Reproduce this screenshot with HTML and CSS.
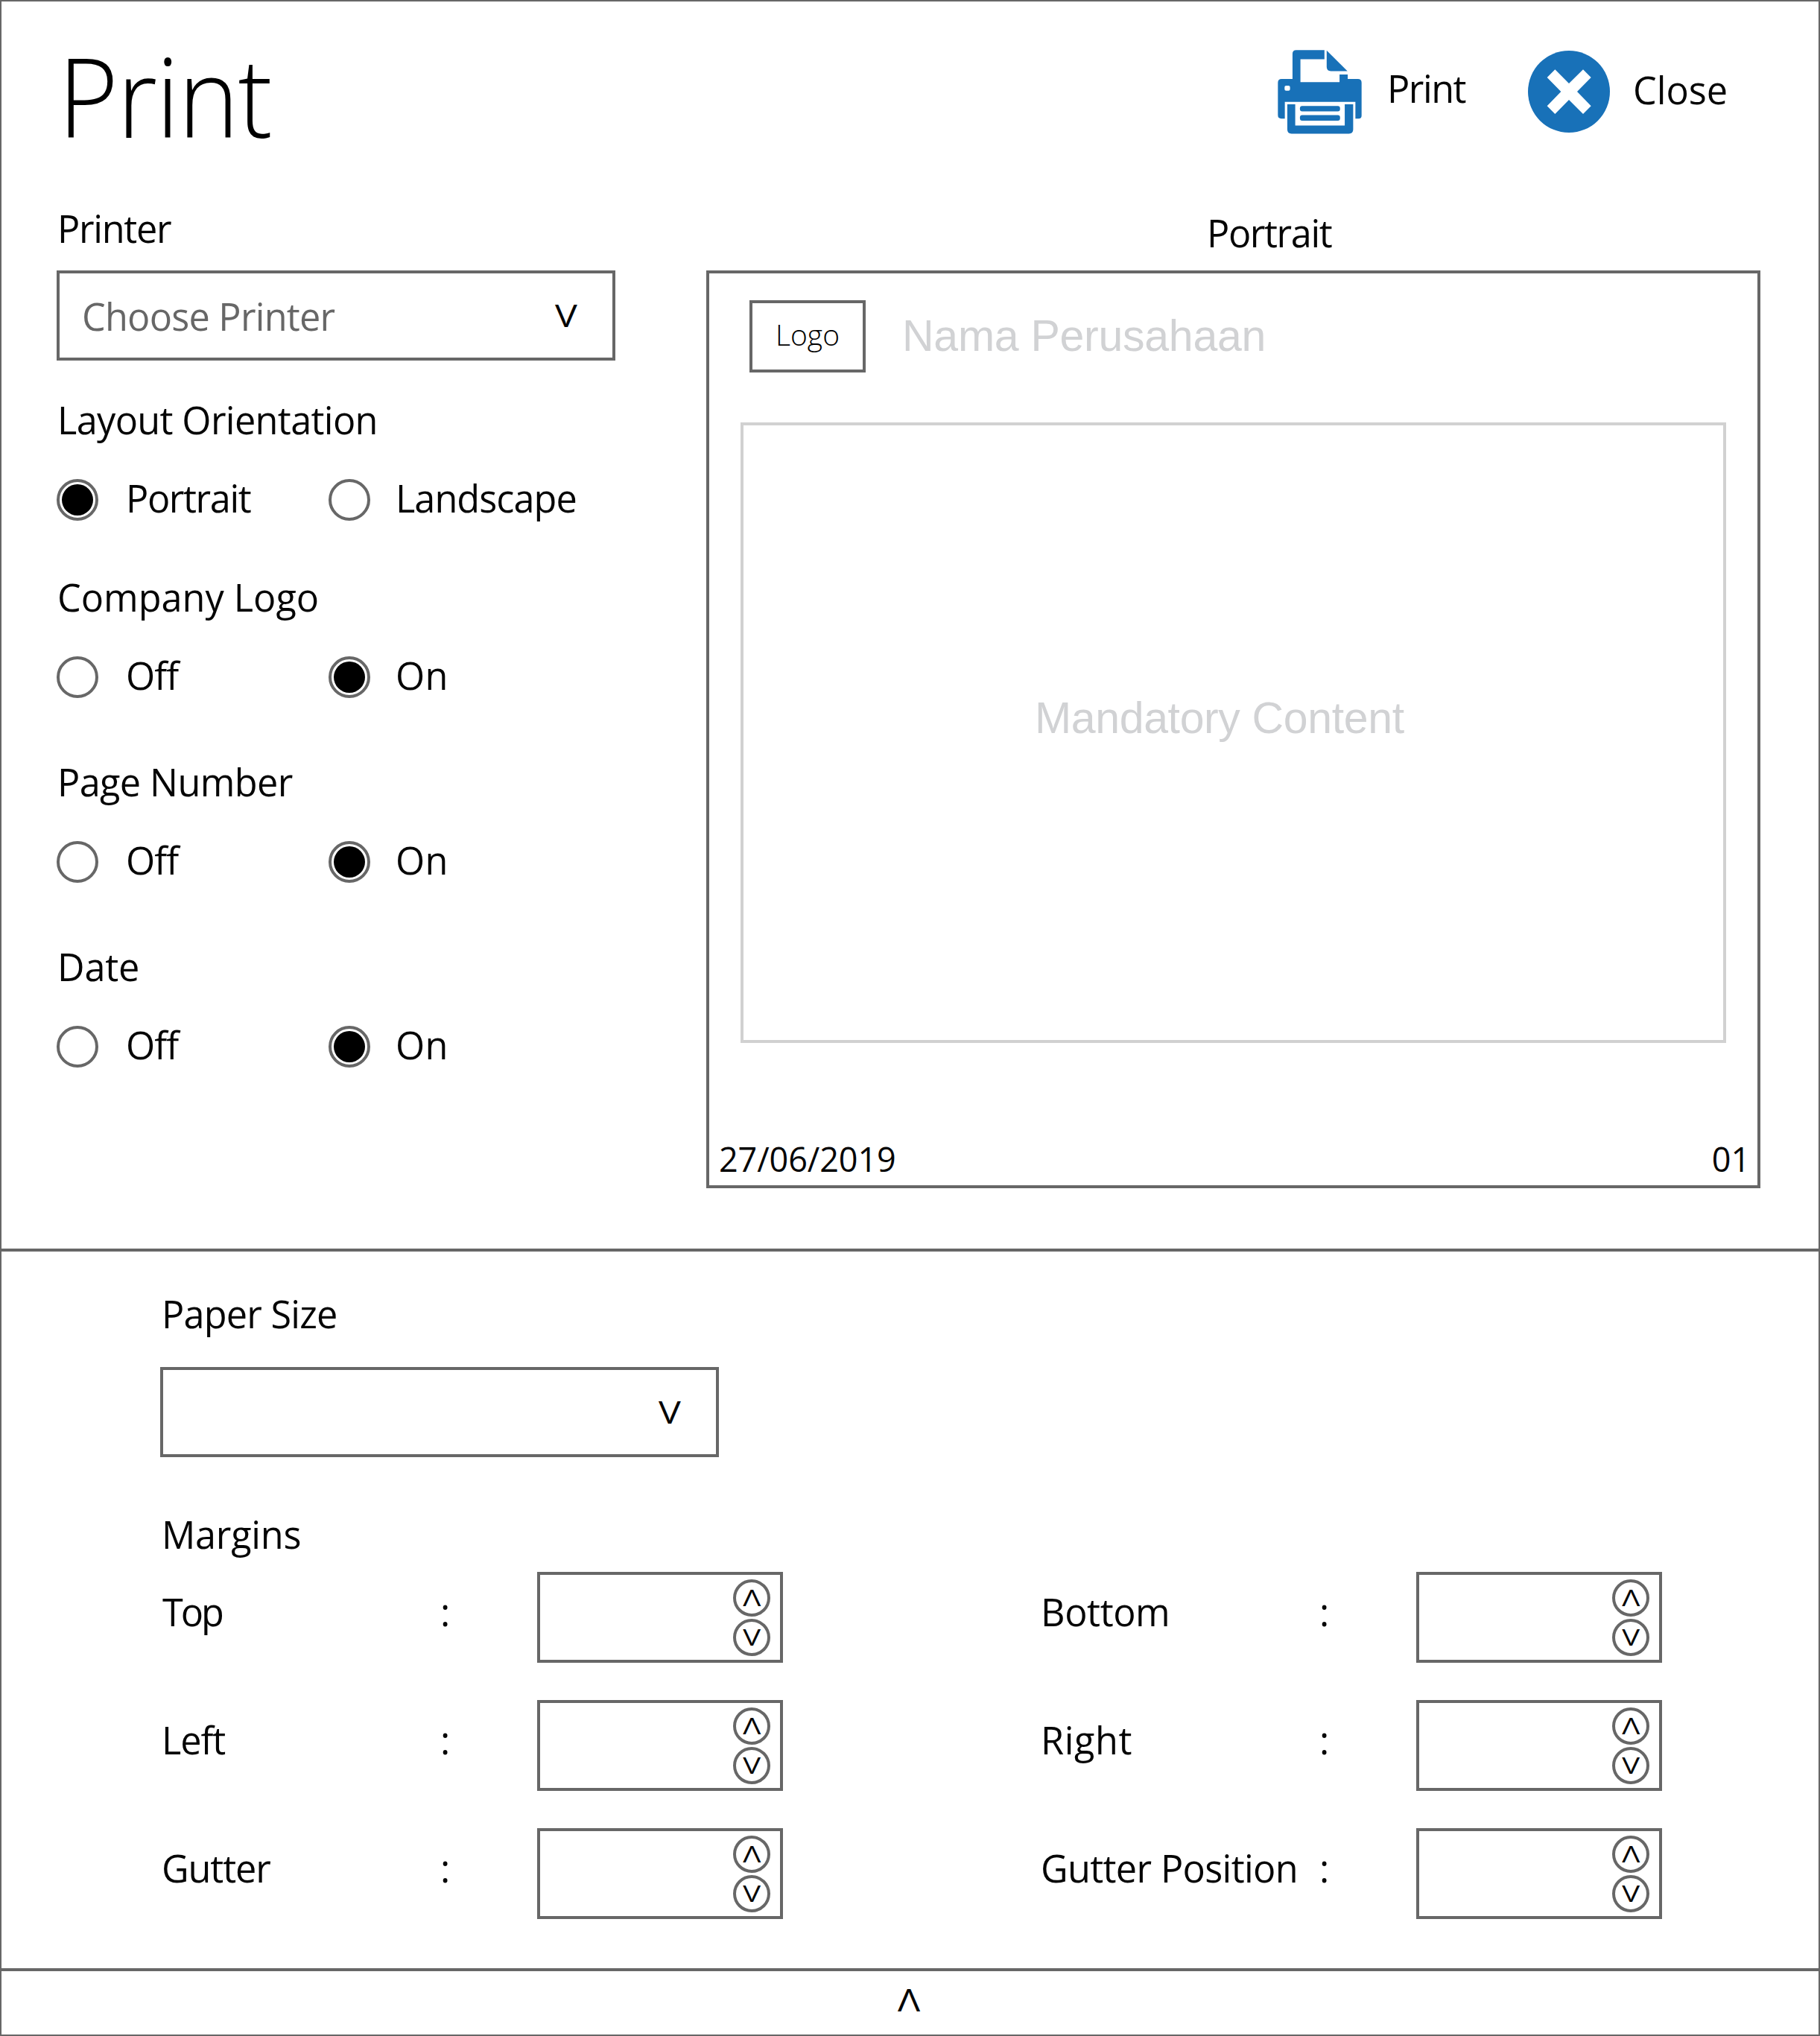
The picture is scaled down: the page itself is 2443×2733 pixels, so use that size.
FILE: index.html
```html
<!DOCTYPE html>
<html lang="en">
<head>
<meta charset="utf-8">
<title>Print</title>
<link rel="stylesheet" href="styles.css">
</head>
<body>
<div class="window">
  <section class="setup">
    <header class="header">
      <h1 class="title">Print</h1>
      <div class="actions">
        <div class="action action-print">
          <svg class="icon-printer" viewBox="42 51 340 339" fill="#1871b8">
            <path fill-rule="evenodd" d="M102 168V66q0-15 15-15H231V88H134V181H292V150H325V168H366q15 0 15 15V316q0 12-12 12H356V260H71V328H57q-14 0-14-14V183q0-15 15-15ZM76 195q-6 0-6 6v8q0 6 6 6h10q6 0 6-6v-8q0-6-6-6Z"/>
            <path d="M240 53L324 136H257q-17 0-17-17Z"/>
            <path d="M81 270H113V356H313V270H347V372q0 17-17 17H98q-17 0-17-17Z"/>
            <rect x="132" y="277" width="162" height="22" rx="9"/>
            <rect x="132" y="314" width="162" height="22" rx="9"/>
          </svg>
          <span class="text ls-print">Print</span>
        </div>
        <div class="action action-close">
          <svg class="icon-close" viewBox="0 0 330 330">
            <circle cx="165" cy="165" r="165" fill="#1871b8"/>
            <path fill="#fff" d="M77 108L109 76L165 132L222 76L254 108L198 165L254 223L222 255L165 198L109 255L77 223L133 165Z"/>
          </svg>
          <span class="text">Close</span>
        </div>
      </div>
    </header>
    <div class="columns">
      <div class="options">
        <div class="text label ls-printer">Printer</div>
        <div class="select printer-select">
          <span class="text placeholder">Choose Printer</span>
          <span class="caret">V</span>
        </div>
        <div class="group orientation">
          <div class="text label ls-layout">Layout Orientation</div>
          <div class="radios">
            <span class="radio checked"></span><span class="text choice ls-portrait">Portrait</span>
            <span class="radio"></span><span class="text choice ls-landscape">Landscape</span>
          </div>
        </div>
        <div class="group logo-group">
          <div class="text label">Company Logo</div>
          <div class="radios">
            <span class="radio"></span><span class="text choice ls-off">Off</span>
            <span class="radio checked"></span><span class="text choice ls-on">On</span>
          </div>
        </div>
        <div class="group">
          <div class="text label ls-page">Page Number</div>
          <div class="radios">
            <span class="radio"></span><span class="text choice ls-off">Off</span>
            <span class="radio checked"></span><span class="text choice ls-on">On</span>
          </div>
        </div>
        <div class="group">
          <div class="text label ls-date">Date</div>
          <div class="radios">
            <span class="radio"></span><span class="text choice ls-off">Off</span>
            <span class="radio checked"></span><span class="text choice ls-on">On</span>
          </div>
        </div>
      </div>
      <div class="preview-column">
        <div class="text preview-title ls-portrait">Portrait</div>
        <div class="preview">
          <div class="preview-head">
            <div class="logo-box">Logo</div>
            <div class="company">Nama Perusahaan</div>
          </div>
          <div class="content-box">Mandatory Content</div>
          <div class="preview-foot"><span>27/06/2019</span><span>01</span></div>
        </div>
      </div>
    </div>
  </section>
  <section class="paper">
    <div class="text ls-paper">Paper Size</div>
    <div class="select paper-select"><span class="caret">V</span></div>
    <div class="text ls-margins">Margins</div>
    <div class="margins">
      <span class="text ls-top">Top</span><span class="text">:</span>
      <div class="spinner"><span class="step"><i>Λ</i></span><span class="step"><i>V</i></span></div>
      <span class="text right-col ls-bottom">Bottom</span><span class="text">:</span>
      <div class="spinner"><span class="step"><i>Λ</i></span><span class="step"><i>V</i></span></div>

      <span class="text ls-left">Left</span><span class="text">:</span>
      <div class="spinner"><span class="step"><i>Λ</i></span><span class="step"><i>V</i></span></div>
      <span class="text right-col ls-right">Right</span><span class="text">:</span>
      <div class="spinner"><span class="step"><i>Λ</i></span><span class="step"><i>V</i></span></div>

      <span class="text ls-left">Gutter</span><span class="text">:</span>
      <div class="spinner"><span class="step"><i>Λ</i></span><span class="step"><i>V</i></span></div>
      <span class="text right-col ls-position">Gutter Position</span><span class="text">:</span>
      <div class="spinner"><span class="step"><i>Λ</i></span><span class="step"><i>V</i></span></div>
    </div>
  </section>
  <footer class="footer"><span class="caret">Λ</span></footer>
</div>
</body>
</html>
```
FILE: styles.css
```css
* { box-sizing: border-box; }
body { margin: 0; background: #fff; color: #050505; font-family: "Open Sans", "Noto Sans", sans-serif; }
.window { width: 2443px; height: 2733px; border: 2px solid #676767; display: flex; flex-direction: column; overflow: hidden; }
.text { font-size: 50.4px; line-height: 70px; margin-bottom: -2px; white-space: nowrap; }

.setup { height: 1678px; flex: none; border-bottom: 4px solid #676767; }
.header { height: 270px; display: flex; justify-content: space-between; align-items: flex-start; padding-left: 76px; }
.title { margin: 26px 0 0; font-size: 147px; font-weight: 300; line-height: 200px; letter-spacing: -1.6px; color: #000; transform: scaleX(.94); transform-origin: left; }
.actions { display: flex; width: 728px; }
.action { display: flex; align-items: flex-start; }
.action-print { width: 338px; padding-top: 82px; }
.action-close { padding-top: 84px; }
.icon-printer { width: 113px; height: 113px; margin: -17px 34px 0 2px; flex: none; }
.icon-close { width: 110px; height: 110px; margin: -18px 31px 0 0; flex: none; }

.columns { display: flex; gap: 122px; padding-left: 74px; }
.options { width: 750px; }
.label { padding-left: 1px; }
.select { width: 750px; height: 121px; border: 4px solid #676767; display: flex; justify-content: flex-end; padding-right: 47px; }
.printer-select { margin: 23px 0 45px; justify-content: space-between; padding-left: 30px; }
.placeholder { color: #676767; letter-spacing: -.76px; margin-top: 23px; }
.caret { font-size: 42px; line-height: 58px; height: 58px; width: 30px; display: flex; justify-content: center; transform: scaleX(1.19); margin-top: 27px; }
.orientation { margin-bottom: 68px; }
.group + .group { margin-bottom: 78px; }
.radios { margin-top: 46px; display: grid; grid-template-columns: 93px 272px 90px auto; height: 56px; }
.radio { width: 56px; height: 56px; border: 4px solid #676767; border-radius: 50%; display: flex; align-items: center; justify-content: center; }
.checked::after { content: ""; width: 42px; height: 42px; border-radius: 50%; background: #000; }
.choice { line-height: 52px; }

.preview-column { width: 1415px; padding-top: 6px; }
.preview-title { padding-left: 672px; }
.preview { margin-top: 17px; height: 1232px; border: 4px solid #676767; padding: 36px 42px 0; display: flex; flex-direction: column; }
.preview-head { display: flex; padding-left: 12px; height: 164px; }
.logo-box { width: 156px; height: 97px; border: 4px solid #676767; color: #000; font-size: 39px; font-weight: 300; line-height: 84px; text-align: center; }
.company { margin: 15px 0 0 49px; font: 59px/66px "Liberation Sans", Arial, sans-serif; letter-spacing: -.26px; color: #d1d2d4; white-space: nowrap; }
.content-box { height: 833px; border: 4px solid #d1d1d1; padding: 360px 0 0 391px; font: 59px/66px "Liberation Sans", Arial, sans-serif; letter-spacing: -.36px; color: #d1d2d4; white-space: nowrap; }
.preview-foot { display: flex; justify-content: space-between; margin: 125px -32px 0 -29px; font-size: 45px; line-height: 62px; letter-spacing: -.12px; }

.paper { height: 966px; flex: none; border-bottom: 4px solid #676767; padding: 49px 0 0 215px; }
.paper-select { margin: 38px 0 69px -2px; }
.margins { margin-top: 17px; display: grid; grid-template-columns: 374px 130px 330px 720px 130px 330px; grid-auto-rows: 172px; }
.margins .text { margin-top: 19px; }
.margins .right-col { padding-left: 346px; }
.spinner { height: 122px; border: 4px solid #676767; display: flex; flex-direction: column; align-items: flex-end; justify-content: center; gap: 3px; padding-right: 13px; }
.step { width: 50px; height: 50px; border: 4px solid #676767; border-radius: 50%; display: flex; justify-content: center; }
.step i { font-style: normal; font-size: 31px; line-height: 42px; transform: scaleX(1.29); margin-top: -1px; }
.footer { flex: 1; display: flex; padding-left: 1203px; }
.footer .caret { margin-top: 9px; }

/* per-label tracking */
.ls-print { letter-spacing: -1.5px; }
.ls-printer { letter-spacing: -1.3px; }
.ls-layout { letter-spacing: -.64px; }
.ls-portrait { letter-spacing: -1.4px; }
.ls-landscape { letter-spacing: -.95px; }
.ls-off { letter-spacing: -1px; }
.ls-on { letter-spacing: .4px; }
.ls-page { letter-spacing: -.6px; }
.ls-date { letter-spacing: -.15px; }
.ls-paper { letter-spacing: -.78px; }
.ls-margins { letter-spacing: -.25px; }
.ls-top { letter-spacing: -3px; padding-left: 1px; }
.ls-bottom { letter-spacing: -.4px; }
.ls-left { letter-spacing: -1.1px; }
.ls-right { letter-spacing: .6px; }
.ls-position { letter-spacing: -.65px; }
```
